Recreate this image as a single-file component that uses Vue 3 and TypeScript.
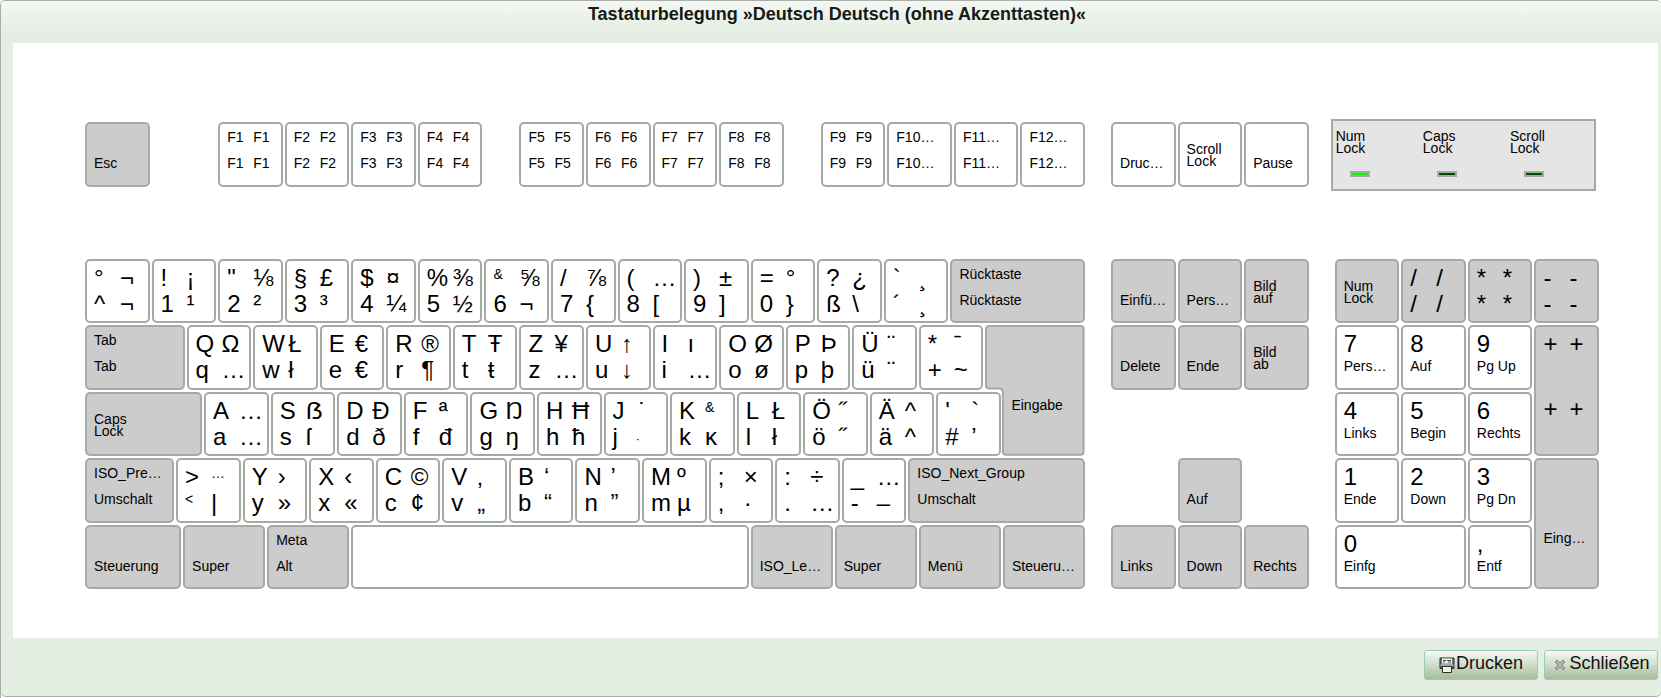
<script setup lang="ts">
interface Key {
  col: number
  row: number
  cols: number
  rows: number
  labels: string[]
  dark: boolean
  small: number[]
  lock: boolean
}

type Extra = Partial<Pick<Key, 'dark' | 'small' | 'rows' | 'lock'>>
type Spec = [width: number, labels: string, extra?: Extra]

const PITCH = 19
const dark: Extra = { dark: true }

/* Labels are separated by spaces: upper left, upper right, lower left, lower right. "~~" is empty. */
function split(labels: string): string[] {
  return labels.split(' ').map((l) => (l === '~~' ? '' : l.replace(/_~/g, ' ')))
}

function place(row: number, start: number, specs: Spec[]): Key[] {
  let col = start
  return specs.map(([cols, labels, extra]) => {
    const key: Key = {
      col, row, cols, rows: 1, labels: split(labels), dark: false, small: [], lock: false, ...extra,
    }
    col += cols
    return key
  })
}

const chars = (list: string[], smalls: Record<number, number[]> = {}): Spec[] =>
  list.map((l, i) => [PITCH, l, { small: smalls[i] ?? [] }])

const fn = (from: number, to: number): Spec[] => {
  const out: Spec[] = []
  for (let n = from; n <= to; n++) {
    out.push([PITCH, n < 10 ? `F${n} F${n} F${n} F${n}` : `F${n}… ~~ F${n}… ~~`])
  }
  return out
}

const functionKeys: Key[] = [
  ...place(1, 1, [[PITCH, '~~ ~~ Esc ~~', dark]]),
  ...place(1, 39, fn(1, 4)),
  ...place(1, 125, fn(5, 8)),
  ...place(1, 211, fn(9, 12)),
]

const systemKeys: Key[] = place(1, 1, [
  [1, '~~ ~~ Druc… ~~'],
  [1, 'Scroll Lock', { lock: true }],
  [1, '~~ ~~ Pause ~~'],
])

const mainKeys: Key[] = [
  ...place(1, 1, [
    ...chars(
      ['° ¬ ^ ¬', '! ¡ 1 ¹', '" ⅛ 2 ²', '§ £ 3 ³', '$ ¤ 4 ¼', '% ⅜ 5 ½', '& ⅝ 6 ¬', '/ ⅞ 7 {',
        '( … 8 [', ') ± 9 ]', '= ° 0 }', '? ¿ ß \\', '` ¸ ´ ¸'],
      { 6: [0] },
    ),
    [39, 'Rücktaste ~~ Rücktaste ~~', dark],
  ]),
  ...place(2, 1, [
    [29, 'Tab ~~ Tab ~~', dark],
    ...chars(['Q Ω q …', 'W Ł w ł', 'E € e €', 'R ® r ¶', 'T Ŧ t ŧ', 'Z ¥ z …', 'U ↑ u ↓', 'I ı i …',
      'O Ø o ø', 'P Þ p þ', 'Ü ¨ ü ¨', '* ˉ + ~']),
  ]),
  ...place(3, 1, [
    [34, 'Caps Lock', { dark: true, lock: true }],
    ...chars(
      ['A … a …', 'S ẞ s ſ', 'D Đ d ð', 'F ª f đ', 'G Ŋ g ŋ', 'H Ħ h ħ', 'J ˙ j \u00a0\u0323', 'K & k ĸ',
        'L Ł l ł', 'Ö ˝ ö ˝', 'Ä ^ ä ^', "' ` # ’"],
      { 6: [3], 7: [1] },
    ),
  ]),
  ...place(4, 1, [
    [26, 'ISO_Pre… ~~ Umschalt ~~', dark],
    ...chars(
      ['> … < |', 'Y › y »', 'X ‹ x «', 'C © c ¢', 'V ‚ v „', 'B ‘ b “', 'N ’ n ”', 'M º m µ',
        '; × , ·', ': ÷ . …', '_ … - –'],
      { 0: [1, 2] },
    ),
    [51, 'ISO_Next_Group ~~ Umschalt ~~', dark],
  ]),
  ...place(5, 1, [
    [28, '~~ ~~ Steuerung ~~', dark],
    [24, '~~ ~~ Super ~~', dark],
    [24, 'Meta ~~ Alt ~~', dark],
    [114, '~~ ~~ ~~ ~~'],
    [24, '~~ ~~ ISO_Le… ~~', dark],
    [24, '~~ ~~ Super ~~', dark],
    [24, '~~ ~~ Menü ~~', dark],
    [24, '~~ ~~ Steueru… ~~', dark],
  ]),
]

const navKeys: Key[] = [
  ...place(1, 1, [
    [1, '~~ ~~ Einfü… ~~', dark],
    [1, '~~ ~~ Pers… ~~', dark],
    [1, 'Bild auf', { dark: true, lock: true }],
  ]),
  ...place(2, 1, [
    [1, '~~ ~~ Delete ~~', dark],
    [1, '~~ ~~ Ende ~~', dark],
    [1, 'Bild ab', { dark: true, lock: true }],
  ]),
  ...place(4, 2, [[1, '~~ ~~ Auf ~~', dark]]),
  ...place(5, 1, [
    [1, '~~ ~~ Links ~~', dark],
    [1, '~~ ~~ Down ~~', dark],
    [1, '~~ ~~ Rechts ~~', dark],
  ]),
]

const padKeys: Key[] = [
  ...place(1, 1, [
    [1, 'Num Lock', { dark: true, lock: true }],
    [1, '/ / / /', dark],
    [1, '* * * *', dark],
    [1, '- - - -', dark],
  ]),
  ...place(2, 1, [
    [1, '7 ~~ Pers… ~~'],
    [1, '8 ~~ Auf ~~'],
    [1, '9 ~~ Pg_~Up ~~'],
    [1, '+ + + +', { dark: true, rows: 2 }],
  ]),
  ...place(3, 1, [[1, '4 ~~ Links ~~'], [1, '5 ~~ Begin ~~'], [1, '6 ~~ Rechts ~~']]),
  ...place(4, 1, [
    [1, '1 ~~ Ende ~~'],
    [1, '2 ~~ Down ~~'],
    [1, '3 ~~ Pg_~Dn ~~'],
    [1, '~~ ~~ Eing… ~~', { dark: true, rows: 2 }],
  ]),
  ...place(5, 1, [[2, '0 ~~ Einfg ~~'], [1, ', ~~ Entf ~~']]),
]

const blocks = [
  { name: 'wide', keys: functionKeys, single: true },
  { name: 'nav', keys: systemKeys, single: true },
  { name: 'leds', keys: [] as Key[], single: true },
  { name: 'wide', keys: mainKeys, single: false },
  { name: 'nav', keys: navKeys, single: false },
  { name: 'pad', keys: padKeys, single: false },
]

const leds = [
  { name: ['Num', 'Lock'], on: true },
  { name: ['Caps', 'Lock'], on: false },
  { name: ['Scroll', 'Lock'], on: false },
]

const area = (k: Key) => ({
  gridColumn: `${k.col} / span ${k.cols}`,
  gridRow: `${k.row} / span ${k.rows}`,
})

const isSmall = (k: Key, i: number) => k.labels[i].length > 1 || k.small.includes(i)
</script>

<template>
  <main class="dialog">
    <div class="body">
      <h1 class="title">Tastaturbelegung »Deutsch Deutsch (ohne Akzenttasten)«</h1>

      <section class="keyboard">
        <template v-for="(block, b) in blocks" :key="b">
          <div v-if="block.name === 'leds'" class="leds">
            <div v-for="led in leds" :key="led.name[0]" class="led">
              <span>{{ led.name[0] }}</span>
              <span>{{ led.name[1] }}</span>
              <i class="lamp" :class="{ on: led.on }"></i>
            </div>
          </div>
          <div v-else class="block" :class="[block.name, { single: block.single }]">
            <div
              v-for="(k, i) in block.keys"
              :key="i"
              class="key"
              :class="{ dark: k.dark, tall: k.rows > 1, lock: k.lock }"
              :style="area(k)"
            >
              <span
                v-for="(label, n) in k.labels"
                :key="n"
                class="label"
                :class="{ small: isSmall(k, n) }"
              >{{ label }}</span>
            </div>
            <div v-if="block.name === 'wide' && !block.single" class="enter">
              <svg class="enter-shape" viewBox="0 0 100 132" preserveAspectRatio="none" aria-hidden="true">
                <path
                  d="M4 1H96Q99 1 99 4V128Q99 131 96 131H21Q18 131 18 128V68Q18 64 14 64H4Q1 64 1 61V4Q1 1 4 1Z"
                />
              </svg>
              <span class="enter-label">Eingabe</span>
            </div>
          </div>
        </template>
      </section>

      <footer class="actions">
        <button type="button" class="action">
          <svg width="16" height="16" viewBox="0 0 16 16" aria-hidden="true">
            <path d="M1 1h14v10.500h-2v-2H3v2H1z" fill="#77797a" stroke="#2a2c2c" stroke-linejoin="round" />
            <path d="M3 1.500h10v5H3z" fill="#f6f6f6" />
            <path d="M4 3.500h3M8 3.500h4M4 5h2M9 5h3" stroke="#444" />
            <path d="M1.500 8h13" stroke="#d3d5d5" />
            <path d="M3.500 9.500h9v6h-9z" fill="#f5faef" stroke="#2c2f2f" />
            <path d="M5 13.500l3-3M8 14l3-2.500" stroke="#b6dda5" />
          </svg>
          <span class="action-label">Drucken</span>
        </button>
        <button type="button" class="action">
          <svg width="16" height="16" viewBox="0 0 16 16" aria-hidden="true">
            <path
              d="M3 5l2-2 3 3 3-3 2 2-3 3 3 3-2 2-3-3-3 3-2-2 3-3z"
              fill="#b1b5af"
              stroke="#7e837c"
              stroke-linejoin="round"
            />
          </svg>
          <span class="action-label">Schließen</span>
        </button>
      </footer>
    </div>
  </main>
</template>

<style>
body {
  margin: 0;
  background: #fff;
}
</style>

<style scoped>
.dialog {
  box-sizing: border-box;
  min-height: 100vh;
  border-left: 1px solid #a9ada9;
  border-top: 1px solid #a9ada9;
  border-radius: 5px 5px 0 0;
  overflow: hidden;
  font-family: "Liberation Sans", Arial, sans-serif;
  color: #000;
}

.body {
  border-bottom: 1px solid #a9ada9;
  border-radius: 0 0 5px 5px;
  background: linear-gradient(#f4f7f2, #e4eee2 32px);
}

.title {
  margin: 0;
  height: 42px;
  padding-left: 12px;
  box-sizing: border-box;
  font-size: 18px;
  line-height: 26px;
  text-align: center;
  color: #161a16;
}

.keyboard {
  display: grid;
  grid-template-columns: minmax(0, 286fr) minmax(0, 57fr) minmax(0, 76fr);
  column-gap: 24px;
  row-gap: 70px;
  margin: 0 3px 0 12px;
  padding: 79px 57px 47px 72px;
  background: #fff;
}

.block {
  display: grid;
  grid-template-rows: repeat(5, 1fr);
  min-height: 332px;
}

.block.single {
  grid-template-rows: 67px;
  min-height: 0;
}

.wide {
  grid-template-columns: repeat(286, minmax(0, 1fr));
}

.nav {
  grid-template-columns: repeat(3, minmax(0, 1fr));
}

.pad {
  grid-template-columns: repeat(4, minmax(0, 1fr));
}

.key {
  display: grid;
  grid-template-columns: 26px 1fr;
  grid-template-rows: 26px 26px;
  box-sizing: border-box;
  margin: 0 2px 2px 0;
  padding: 4px 0 0 7px;
  border: 2px solid #a6aaa5;
  border-radius: 5px;
  background: #fff;
  white-space: nowrap;
}

.key.dark {
  background: #ccc;
}

.key.tall {
  row-gap: 39px;
}

.label {
  font-size: 24px;
  line-height: 26px;
}

.label.small {
  font-size: 14px;
  line-height: 19px;
}

.key.lock {
  display: flex;
  flex-direction: column;
  padding-top: 19px;
}

.key.lock .label {
  line-height: 12px;
}

.enter {
  position: relative;
  grid-column: 258 / span 29;
  grid-row: 2 / span 2;
  margin: 0 2px 2px 0;
  padding: 71px 0 0 26px;
}

.enter-shape {
  position: absolute;
  inset: 0;
  width: 100%;
  height: 100%;
}

.enter-shape path {
  fill: #ccc;
  stroke: #a6aaa5;
  stroke-width: 2;
}

.enter-label {
  position: relative;
  display: block;
  font-size: 14px;
  line-height: 19px;
}

.leds {
  display: grid;
  grid-template-columns: repeat(3, 1fr);
  box-sizing: border-box;
  height: 72px;
  margin: -3px 5px -2px -4px;
  padding-top: 9px;
  border: 2px solid #a6aaa5;
  background: #e5e5e5;
}

.led {
  display: flex;
  flex-direction: column;
  padding-left: 3px;
  font-size: 14px;
  line-height: 12px;
}

.lamp {
  box-sizing: border-box;
  width: 20px;
  height: 6px;
  margin: 17px 0 0 14px;
  border: 2px solid #a6aaa5;
  background: #004d00;
}

.lamp.on {
  background: #0f0;
}

.actions {
  display: flex;
  justify-content: flex-end;
  gap: 6px;
  padding: 12px 3px 16px;
}

.action {
  display: flex;
  align-items: center;
  justify-content: center;
  gap: 1px;
  box-sizing: border-box;
  width: 114px;
  height: 30px;
  padding: 0;
  border: 1px solid #98cfb4;
  border-radius: 3px;
  background: linear-gradient(#f6f9f5, #cfdccb 50%, #a5bd9b);
  font-family: inherit;
  font-size: 18px;
  color: #111;
}

.action-label {
  padding-bottom: 4px;
  line-height: 20px;
}
</style>
